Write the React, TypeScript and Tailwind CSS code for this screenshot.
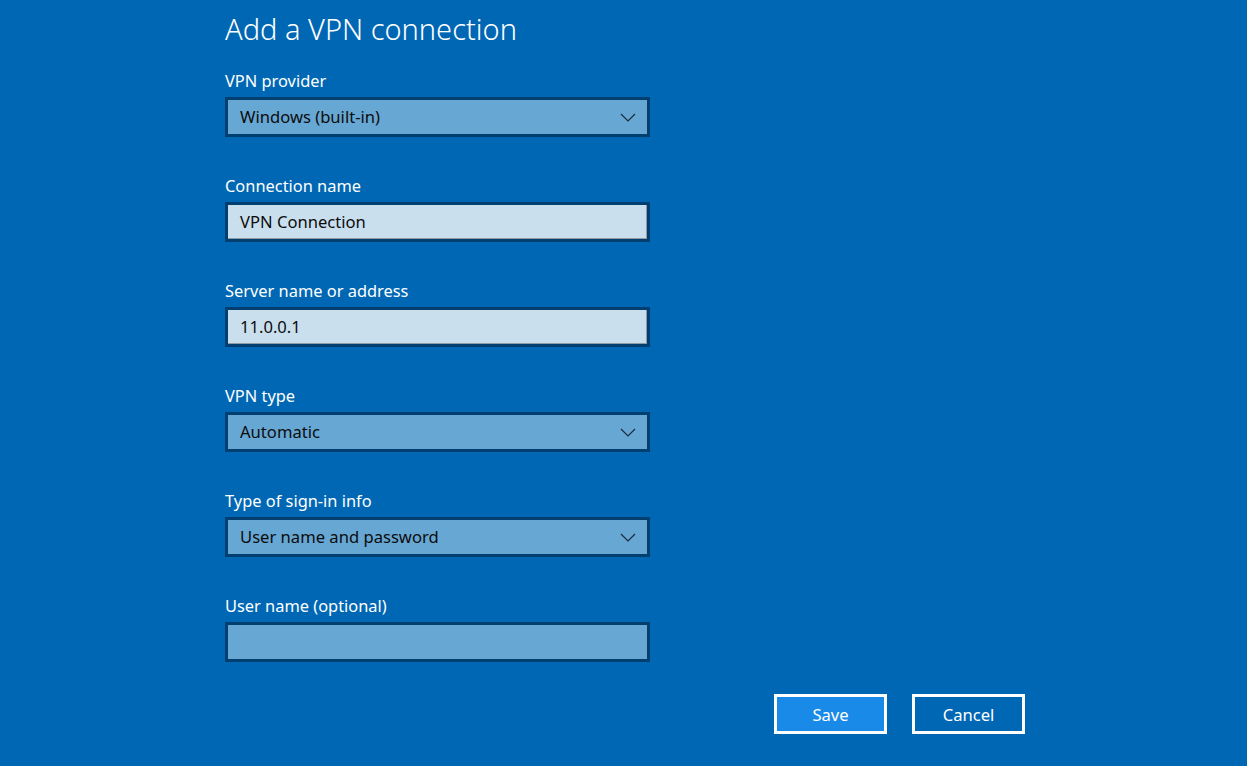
import React from "react";

const font = { fontFamily: '"Noto Sans", "Open Sans", "Liberation Sans", sans-serif' };

function Chevron() {
  return (
    <svg width="16" height="9" viewBox="0 0 16 9" className="shrink-0">
      <path d="M1 1 L8 8 L15 1" fill="none" stroke="#1d2b38" strokeWidth="1.2" />
    </svg>
  );
}

function Label({ children }: { children: React.ReactNode }) {
  return <div className="text-[16.4px] leading-[24px] text-white">{children}</div>;
}

function Select({ value }: { value: string }) {
  return (
    <div className="mt-[4px] flex h-[40px] w-[425px] items-center justify-between border-[3px] border-[#003f6f] bg-[#67a7d4] pl-[12px] pr-[11px]">
      <span className="pt-[1px] text-[16.6px] text-[#0c0c0c]">{value}</span>
      <Chevron />
    </div>
  );
}

function TextInput({ value }: { value: string }) {
  return (
    <div className="mt-[4px] h-[40px] w-[425px] border-[3px] border-[#003f6f]">
      <div className="flex h-full items-center border-b border-r border-[#8f9aa3] bg-[#c9dfee] pl-[12px]">
        <span className="pt-[1px] text-[16.6px] text-[#0c0c0c]">{value}</span>
      </div>
    </div>
  );
}

function EmptyInput() {
  return <div className="mt-[4px] h-[40px] w-[425px] border-[3px] border-[#003f6f] bg-[#67a7d4]" />;
}

export default function App() {
  return (
    <div className="h-[766px] w-[1247px] overflow-hidden bg-[#0067b4]" style={font}>
      <div className="ml-[225px] flex w-[800px] flex-col pt-[9px]">
        <h1 className="text-[29px] font-light leading-[40px] text-white">Add a VPN connection</h1>

        <div className="mt-[20px]">
          <Label>VPN provider</Label>
          <Select value="Windows (built-in)" />
        </div>
        <div className="mt-[37px]">
          <Label>Connection name</Label>
          <TextInput value="VPN Connection" />
        </div>
        <div className="mt-[37px]">
          <Label>Server name or address</Label>
          <TextInput value="11.0.0.1" />
        </div>
        <div className="mt-[37px]">
          <Label>VPN type</Label>
          <Select value="Automatic" />
        </div>
        <div className="mt-[37px]">
          <Label>Type of sign-in info</Label>
          <Select value="User name and password" />
        </div>
        <div className="mt-[37px]">
          <Label>User name (optional)</Label>
          <EmptyInput />
        </div>

        <div className="mt-[32px] flex justify-end gap-[25px]">
          <button className="h-[40px] w-[113px] border-[3px] border-white bg-[#1a8ae8] pt-[3px] text-[16.6px] text-white">
            Save
          </button>
          <button className="h-[40px] w-[113px] border-[3px] border-white bg-[#0067b4] pt-[3px] text-[16.6px] text-white">
            Cancel
          </button>
        </div>
      </div>
    </div>
  );
}
